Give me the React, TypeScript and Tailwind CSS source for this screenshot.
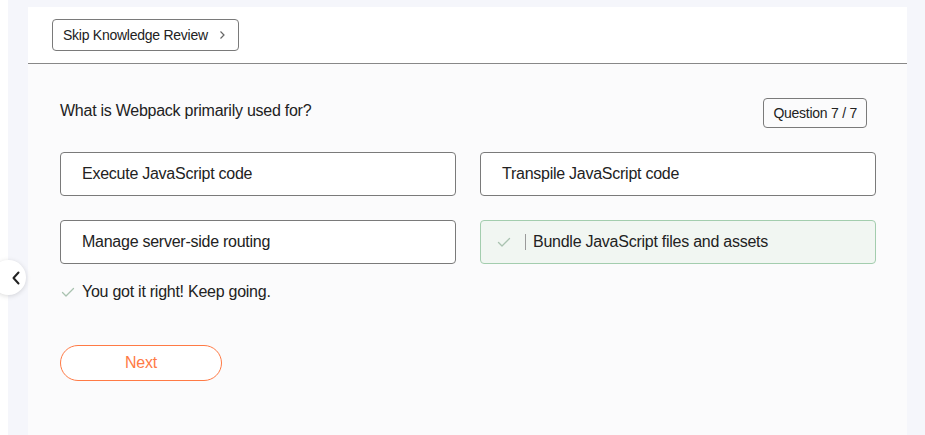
import React from "react";

const Check = ({ className }: { className?: string }) => (
  <svg className={className} width="14" height="14" viewBox="0 0 14 14" fill="none">
    <path d="M1.5 7.5 L5 11 L12.5 3.5" stroke="currentColor" strokeWidth="1.3" strokeLinecap="round" strokeLinejoin="round" />
  </svg>
);

export default function App() {
  const font = { fontFamily: '"Liberation Sans", Arial, sans-serif' };
  return (
    <div className="w-[925px] h-[435px] flex bg-[#f5f6fb] overflow-hidden relative tracking-[-0.016em]" style={font}>
      <div className="w-[8px] bg-white shrink-0" />
      <div className="w-[20px] shrink-0" />
      <div className="w-[879px] mt-[7px] flex flex-col bg-[#fbfbfc]">
        <div className="h-[57px] bg-white border-b border-[#888888] flex items-start pt-[12px] pl-[24px]">
          <button className="h-[32px] pl-[10px] pr-[12px] border border-[#7a7a7a] rounded-[4px] bg-white text-[14px] text-[#222] flex items-center gap-[11px]">
            Skip Knowledge Review
            <svg width="7" height="10" viewBox="0 0 7 10" fill="none">
              <path d="M1.5 1.5 L5 5 L1.5 8.5" stroke="#666" strokeWidth="1.2" />
            </svg>
          </button>
        </div>
        <div className="pl-[32px] pr-[31px] pt-[34px]">
          <div className="flex justify-between items-start">
            <div className="text-[16px] text-[#222] mt-[1px]">What is Webpack primarily used for?</div>
            <div className="h-[30px] mr-[9px] px-[9px] border border-[#7a7a7a] rounded-[4px] text-[14px] text-[#222] flex items-center">
              Question 7 / 7
            </div>
          </div>
          <div className="grid grid-cols-2 gap-x-[24px] gap-y-[24px] mt-[24px]">
            <div className="h-[44px] border border-[#7a7a7a] rounded-[4px] bg-white flex items-center pl-[21px] text-[16px] text-[#222]">
              Execute JavaScript code
            </div>
            <div className="h-[44px] border border-[#7a7a7a] rounded-[4px] bg-white flex items-center pl-[21px] text-[16px] text-[#222]">
              Transpile JavaScript code
            </div>
            <div className="h-[44px] border border-[#7a7a7a] rounded-[4px] bg-white flex items-center pl-[21px] text-[16px] text-[#222]">
              Manage server-side routing
            </div>
            <div className="h-[44px] border border-[#a3cdae] rounded-[4px] bg-[#f1f6f2] flex items-center pl-[16px] text-[16px] text-[#222]">
              <Check className="text-[#a9c2b0]" />
              <span className="ml-[14px] w-[1px] h-[16px] bg-[#9a9a9a]" />
              <span className="ml-[7px]">Bundle JavaScript files and assets</span>
            </div>
          </div>
          <div className="flex items-center mt-[16px] pl-[1px]">
            <Check className="text-[#a9c2b0]" />
            <span className="ml-[7px] text-[16px] text-[#222]">You got it right! Keep going.</span>
          </div>
          <button className="mt-[41px] w-[162px] h-[36px] rounded-full border border-[#ff7a45] text-[#ff7a45] text-[16px] bg-white flex items-center justify-center">
            Next
          </button>
        </div>
      </div>
      <div className="absolute left-[-9px] top-[260px] w-[35px] h-[35px] rounded-full bg-white shadow-[0_1px_5px_rgba(0,0,0,0.15)] flex items-center justify-center">
        <svg width="10" height="14" viewBox="0 0 10 14" fill="none" className="ml-[14px]">
          <path d="M7.5 1.5 L2.5 7 L7.5 12.5" stroke="#222" strokeWidth="2" strokeLinecap="round" strokeLinejoin="round" />
        </svg>
      </div>
    </div>
  );
}
